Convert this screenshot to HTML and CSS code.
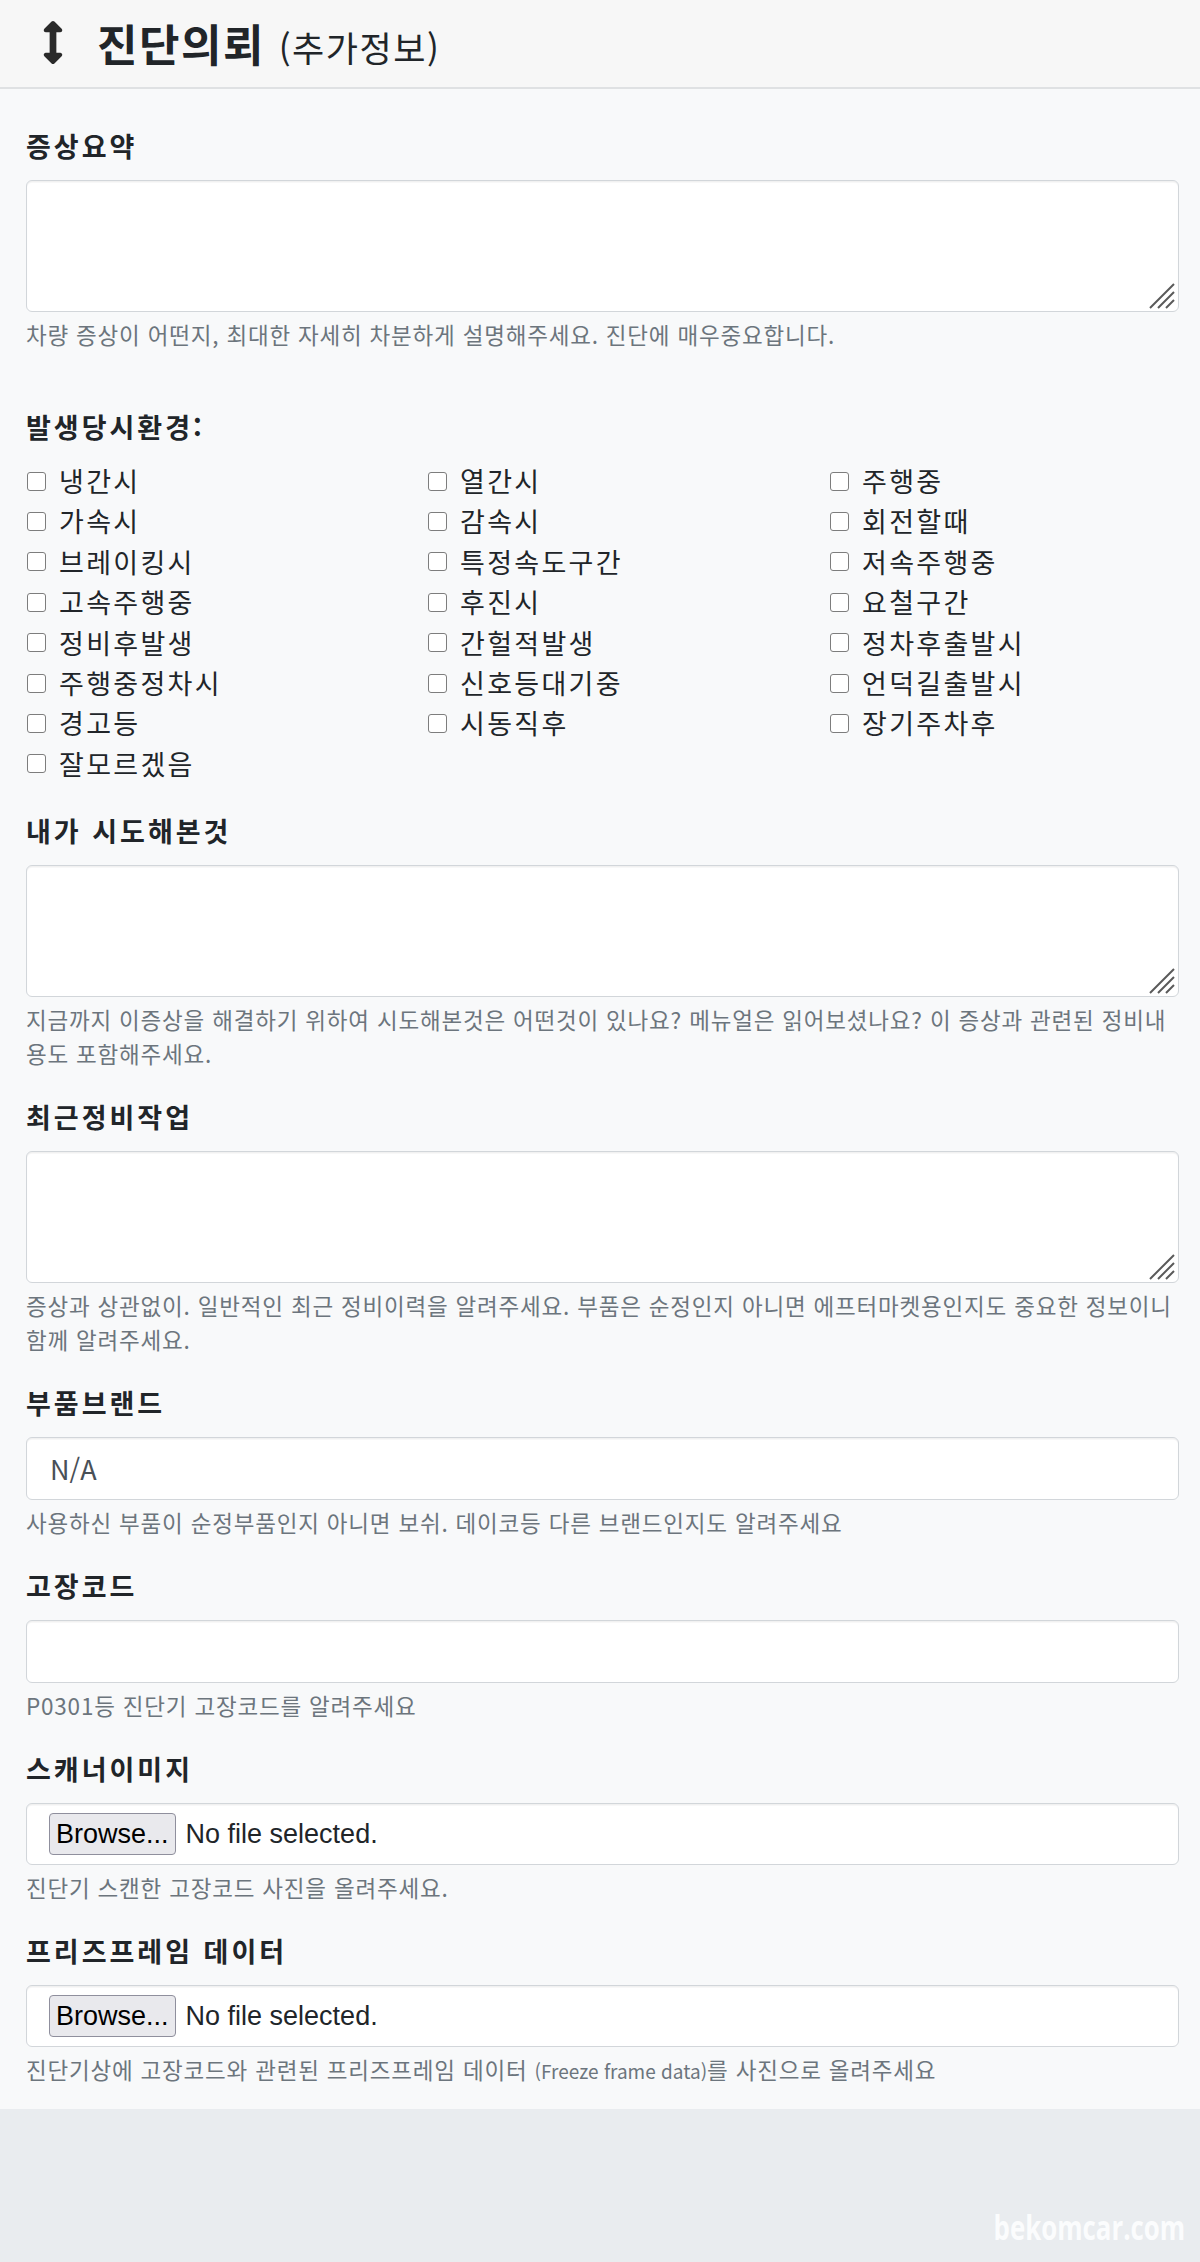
FILE: index.html
```html
<!DOCTYPE html>
<html lang="ko">
<head>
<meta charset="utf-8">
<title>진단의뢰</title>
<link rel="stylesheet" href="styles.css">
</head>
<body>
<header class="page-header">
  <svg class="hdr-icon" viewBox="0 0 256 512" aria-hidden="true"><path d="M214.059 377.941H168V134.059h46.059c21.382 0 32.09-25.851 16.971-40.971L144.971 7.029c-9.373-9.373-24.568-9.373-33.941 0L24.971 93.088c-15.119 15.119-4.411 40.971 16.971 40.971H88v243.882H41.941c-21.382 0-32.09 25.851-16.971 40.971l86.059 86.059c9.373 9.373 24.568 9.373 33.941 0l86.059-86.059c15.12-15.119 4.412-40.971-16.97-40.971z"/></svg>
  <h1 class="hdr-title">진단의뢰 <small>(추가정보)</small></h1>
</header>

<main class="form-wrap">
  <div class="form-group">
    <label class="form-label">증상요약</label>
    <div class="ta-wrap">
      <textarea class="form-control ta"></textarea>
      <svg class="grip" viewBox="0 0 28 28" aria-hidden="true"><path d="M27 3 L3 27 M27 11 L11 27 M27 19 L19 27" /></svg>
    </div>
    <p class="help">차량 증상이 어떤지, 최대한 자세히 차분하게 설명해주세요. 진단에 매우중요합니다.</p>
  </div>

  <div class="form-group env">
    <label class="form-label">발생당시환경:</label>
    <div class="check-grid">
      <label class="check"><input type="checkbox"><span>냉간시</span></label>
      <label class="check"><input type="checkbox"><span>열간시</span></label>
      <label class="check"><input type="checkbox"><span>주행중</span></label>
      <label class="check"><input type="checkbox"><span>가속시</span></label>
      <label class="check"><input type="checkbox"><span>감속시</span></label>
      <label class="check"><input type="checkbox"><span>회전할때</span></label>
      <label class="check"><input type="checkbox"><span>브레이킹시</span></label>
      <label class="check"><input type="checkbox"><span>특정속도구간</span></label>
      <label class="check"><input type="checkbox"><span>저속주행중</span></label>
      <label class="check"><input type="checkbox"><span>고속주행중</span></label>
      <label class="check"><input type="checkbox"><span>후진시</span></label>
      <label class="check"><input type="checkbox"><span>요철구간</span></label>
      <label class="check"><input type="checkbox"><span>정비후발생</span></label>
      <label class="check"><input type="checkbox"><span>간헐적발생</span></label>
      <label class="check"><input type="checkbox"><span>정차후출발시</span></label>
      <label class="check"><input type="checkbox"><span>주행중정차시</span></label>
      <label class="check"><input type="checkbox"><span>신호등대기중</span></label>
      <label class="check"><input type="checkbox"><span>언덕길출발시</span></label>
      <label class="check"><input type="checkbox"><span>경고등</span></label>
      <label class="check"><input type="checkbox"><span>시동직후</span></label>
      <label class="check"><input type="checkbox"><span>장기주차후</span></label>
      <label class="check"><input type="checkbox"><span>잘모르겠음</span></label>
    </div>
  </div>

  <div class="form-group">
    <label class="form-label">내가 시도해본것</label>
    <div class="ta-wrap">
      <textarea class="form-control ta"></textarea>
      <svg class="grip" viewBox="0 0 28 28" aria-hidden="true"><path d="M27 3 L3 27 M27 11 L11 27 M27 19 L19 27" /></svg>
    </div>
    <p class="help">지금까지 이증상을 해결하기 위하여 시도해본것은 어떤것이 있나요? 메뉴얼은 읽어보셨나요? 이 증상과 관련된 정비내용도 포함해주세요.</p>
  </div>

  <div class="form-group">
    <label class="form-label">최근정비작업</label>
    <div class="ta-wrap">
      <textarea class="form-control ta"></textarea>
      <svg class="grip" viewBox="0 0 28 28" aria-hidden="true"><path d="M27 3 L3 27 M27 11 L11 27 M27 19 L19 27" /></svg>
    </div>
    <p class="help">증상과 상관없이. 일반적인 최근 정비이력을 알려주세요. 부품은 순정인지 아니면 에프터마켓용인지도 중요한 정보이니 함께 알려주세요.</p>
  </div>

  <div class="form-group">
    <label class="form-label">부품브랜드</label>
    <input class="form-control inp" type="text" value="N/A">
    <p class="help">사용하신 부품이 순정부품인지 아니면 보쉬. 데이코등 다른 브랜드인지도 알려주세요</p>
  </div>

  <div class="form-group">
    <label class="form-label">고장코드</label>
    <input class="form-control inp" type="text">
    <p class="help">P0301등 진단기 고장코드를 알려주세요</p>
  </div>

  <div class="form-group">
    <label class="form-label">스캐너이미지</label>
    <div class="form-control file">
      <span class="browse">Browse...</span>
      <span class="file-text">No file selected.</span>
    </div>
    <p class="help">진단기 스캔한 고장코드 사진을 올려주세요.</p>
  </div>

  <div class="form-group">
    <label class="form-label">프리즈프레임 데이터</label>
    <div class="form-control file">
      <span class="browse">Browse...</span>
      <span class="file-text">No file selected.</span>
    </div>
    <p class="help">진단기상에 고장코드와 관련된 프리즈프레임 데이터 <span class="latin">(Freeze frame data)</span>를 사진으로 올려주세요</p>
  </div>
</main>

<footer class="page-footer">
  <span class="watermark">bekomcar.com</span>
</footer>
</body>
</html>
```

FILE: styles.css
```css
* { box-sizing: border-box; }

html, body {
  margin: 0;
  padding: 0;
}

body {
  width: 1200px;
  min-height: 2262px;
  background: #e9ecef;
  font-family: "Noto Sans CJK KR", "Noto Sans", sans-serif;
  font-size: 27px;
  line-height: 1.5;
  color: #212529;
}

.page-header {
  height: 89px;
  background: #f7f7f7;
  border-bottom: 2px solid #dfe1e3;
  display: flex;
  align-items: center;
  padding-left: 42px;
}

.hdr-icon {
  width: 22px;
  height: 43px;
  fill: #2a2a2a;
  margin-top: -2px;
}

.hdr-title {
  margin: 0 0 0 33px;
  font-size: 44px;
  font-weight: 700;
  letter-spacing: 1.5px;
  line-height: 1.2;
  color: #212529;
}

.hdr-title small {
  font-size: 35px;
  font-weight: 400;
  letter-spacing: 1.5px;
}

.form-wrap {
  background: #f8f9fa;
  padding: 37px 21px 1px 26px;
}

.form-group {
  margin-bottom: 27px;
}

.form-group:last-child {
  margin-bottom: 20px;
}

.form-group.env {
  margin-top: 56px;
}

.form-label {
  display: block;
  font-weight: 700;
  font-size: 27px;
  letter-spacing: 3px;
  line-height: 40.5px;
  margin-bottom: 13.5px;
}

.form-control {
  display: block;
  width: 100%;
  background: #fff;
  border: 1.5px solid #d2d6da;
  border-radius: 6px;
  box-shadow: inset 0 1.5px 1px rgba(0, 0, 0, 0.06);
  font-family: "Noto Sans CJK KR", "Noto Sans", sans-serif;
  font-size: 27px;
  color: #495057;
}

.ta-wrap {
  position: relative;
}

.ta {
  height: 132px;
  resize: none;
  margin: 0;
}

.grip {
  position: absolute;
  right: 4px;
  bottom: 3px;
  width: 28px;
  height: 28px;
  stroke: #5a5a5a;
  stroke-width: 2;
  fill: none;
}

.inp {
  height: 63px;
  padding: 0 23px;
  margin: 0;
}

.file {
  height: 62px;
  display: flex;
  align-items: center;
  padding: 0 22px;
}

.browse {
  font-family: "Liberation Sans", Arial, sans-serif;
  font-size: 27px;
  line-height: 1;
  color: #000;
  background: #e9e9ed;
  border: 1.5px solid #8f8f9d;
  border-radius: 4px;
  height: 42px;
  padding: 0 6px;
  display: flex;
  align-items: center;
}

.file-text {
  font-family: "Liberation Sans", Arial, sans-serif;
  font-size: 27px;
  color: #212529;
  margin-left: 10px;
}

.help {
  margin: 5px 0 0;
  font-size: 22.5px;
  letter-spacing: 0.8px;
  line-height: 34px;
  color: #6c757d;
}

.help .latin {
  font-size: 19px;
  letter-spacing: 0;
}

.check-grid {
  display: grid;
  grid-template-columns: 401px 402px 1fr;
  padding-left: 1px;
}

.check {
  display: flex;
  align-items: center;
  height: 40.4px;
  font-size: 27px;
  letter-spacing: 2.3px;
}

.check input {
  -webkit-appearance: none;
  appearance: none;
  width: 19px;
  height: 19px;
  margin: 0 13px 0 0;
  border: 1.5px solid #7d7d7d;
  border-radius: 3px;
  background: #fff;
  flex: none;
}

.page-footer {
  height: 152px;
  background: #e9ecef;
  display: flex;
  justify-content: flex-end;
  align-items: flex-end;
  padding: 0 15px 13px 0;
}

.watermark {
  font-family: "Open Sans", "Noto Sans", sans-serif;
  font-weight: 700;
  font-size: 34px;
  line-height: 1.2;
  color: #fbfcfd;
  display: inline-block;
  transform: scaleX(0.76);
  transform-origin: right center;
}
```
